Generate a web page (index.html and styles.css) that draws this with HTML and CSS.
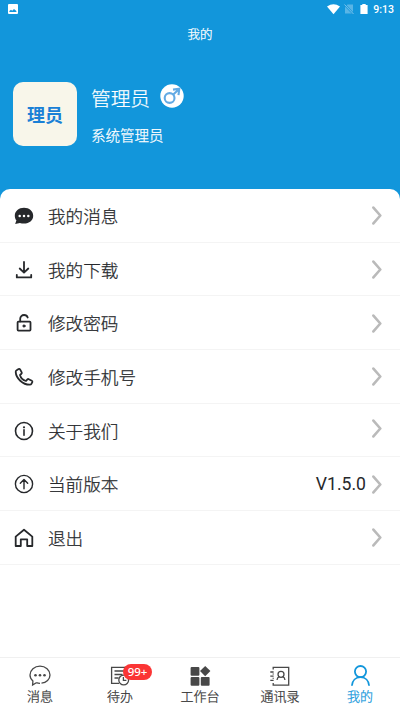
FILE: index.html
```html
<!DOCTYPE html>
<html lang="zh-CN">
<head>
<meta charset="utf-8">
<meta name="viewport" content="width=device-width, initial-scale=1">
<title>我的</title>
<link rel="stylesheet" href="styles.css">
</head>
<body>
<div class="app">
  <header class="hero">
    <div class="status">
      <svg class="status-image" width="10" height="10" viewBox="0 0 10 10"><rect width="10" height="10" rx="1" fill="#fff"/><path d="M1.400 8V7L3 5.700l1.200 1.100L6 5l2.400 2v1z" fill="#1296db"/></svg>
      <div class="status-right">
        <svg width="13" height="11" viewBox="0 0 13 11"><path d="M0 2.600Q6.500-2 13 2.600L6.500 10.300z" fill="#fff"/></svg>
        <svg class="sim" width="10" height="11" viewBox="0 0 10 11"><path d="M3.500 .5H9v9H1V3z" fill="#fff" opacity=".3"/><path d="M.5 .5l9 9.500" stroke="#1296db" stroke-width="2"/><path d="M.5 .5l9 9.500" stroke="#8ac8ed" stroke-width=".9"/></svg>
        <svg class="battery" width="8" height="11" viewBox="0 0 8 11"><path d="M2.300 0h3.400v1H7.600V10H.4V1h1.900z" fill="#fff"/></svg>
        <span class="clock">9:13</span>
      </div>
    </div>
    <h1 class="title">我的</h1>
    <div class="profile">
      <div class="avatar">理员</div>
      <div class="who">
        <div class="name">管理员
          <svg class="gender" width="24" height="24" viewBox="0 0 24 24"><circle cx="12" cy="12" r="11.700" fill="#fff"/><g fill="none" stroke="#63aae4" stroke-width="2.100"><circle cx="9.600" cy="14" r="4.900"/><path d="M13.300 10.400L18.600 5.400M13 5.600l6.300-.8-.8 6.300"/></g></svg>
        </div>
        <div class="role">系统管理员</div>
      </div>
    </div>
  </header>

  <main class="menu">
    <div class="row">
      <svg class="icon" viewBox="0 0 20 20"><path d="M10 1.800c5.200 0 9.200 3.300 9.200 7.900s-4 7.900-9.200 7.900c-1.500 0-2.900-.2-4.100-.7L1.200 18l1.200-3.700C1.300 13.100.8 11.500.8 9.700c0-4.600 4-7.900 9.200-7.900z" fill="#26282b"/><g fill="#fff"><circle cx="5.700" cy="9.900" r="1.250"/><circle cx="10" cy="9.900" r="1.250"/><circle cx="14.300" cy="9.900" r="1.250"/></g></svg>
      <span class="label">我的消息</span>
      <svg class="chevron" viewBox="0 0 10 19"><path d="M1.400 1.600L8.300 9.500 1.400 17.400"/></svg>
    </div>
    <div class="row">
      <svg class="icon line" viewBox="0 0 20 20"><path d="M10 2v10.300M5.700 8.500L10 12.600l4.300-4.100M2.800 14.800v2.600h14.400v-2.600"/></svg>
      <span class="label">我的下载</span>
      <svg class="chevron" viewBox="0 0 10 19"><path d="M1.400 1.600L8.300 9.500 1.400 17.400"/></svg>
    </div>
    <div class="row">
      <svg class="icon line" viewBox="0 0 20 20"><rect x="3.600" y="8.600" width="12.900" height="9" rx=".8"/><path d="M6.200 8.400V5.800c0-2.300 1.700-3.800 3.900-3.800 1.700 0 3.100.9 3.600 2.500"/><circle cx="10" cy="13" r="1.100" fill="#26282b" stroke-width="1"/></svg>
      <span class="label">修改密码</span>
      <svg class="chevron" viewBox="0 0 10 19"><path d="M1.400 1.600L8.300 9.500 1.400 17.400"/></svg>
    </div>
    <div class="row">
      <svg class="icon line" viewBox="0 0 20 20"><path d="M2.600 3.200l2-1.200c.6-.3 1.100-.2 1.500.4l1.600 3c.3.600.2 1-.3 1.400L6 8c.7 2.700 3.200 5.300 6 6l1.400-1.600c.4-.4.800-.5 1.400-.2l3 1.500c.6.300.7.800.5 1.400l-.9 1.700c-.3.600-.8.900-1.600.9C8.800 17.800 2 11.300 1.700 4.900c0-.8.300-1.400.9-1.700z"/></svg>
      <span class="label">修改手机号</span>
      <svg class="chevron" viewBox="0 0 10 19"><path d="M1.400 1.600L8.300 9.500 1.400 17.400"/></svg>
    </div>
    <div class="row">
      <svg class="icon line info" viewBox="0 0 20 20"><circle cx="10" cy="10" r="8.500"/><path d="M10 8.800v5.400"/><circle cx="10" cy="6.300" r="1.100" fill="#26282b" stroke="none"/></svg>
      <span class="label">关于我们</span>
      <svg class="chevron raised" viewBox="0 0 10 19"><path d="M1.400 1.600L8.300 9.500 1.400 17.400"/></svg>
    </div>
    <div class="row">
      <svg class="icon line thin" viewBox="0 0 20 20"><circle cx="10" cy="10" r="8.600"/><path d="M10 14.700V5.800M6.300 9.300L10 5.600l3.700 3.700"/></svg>
      <span class="label">当前版本</span>
      <span class="value">V1.5.0</span>
      <svg class="chevron" viewBox="0 0 10 19"><path d="M1.400 1.600L8.300 9.500 1.400 17.400"/></svg>
    </div>
    <div class="row">
      <svg class="icon line" viewBox="0 0 20 20"><path d="M1.700 18V8.600L10 1.700l8.300 6.900V18h-5.100v-6.700H6.800V18z"/></svg>
      <span class="label">退出</span>
      <svg class="chevron" viewBox="0 0 10 19"><path d="M1.400 1.600L8.300 9.500 1.400 17.400"/></svg>
    </div>
  </main>

  <nav class="tabs">
    <div class="tab">
      <svg class="tab-icon" viewBox="0 0 24 24"><path d="M8.300 19.700c1.200.4 2.400.6 3.700.6M13.500 20.200C18.400 19.600 22 16.200 22 12c0-4.700-4.500-8.800-10-8.800S2 7.300 2 12c0 2.400 1.100 4.500 2.900 6l-.3 4 3.700-2.300"/><g fill="#484848" stroke="none"><circle cx="7.500" cy="12.300" r="1.300"/><circle cx="12" cy="12.300" r="1.300"/><circle cx="16.500" cy="12.300" r="1.300"/></g></svg>
      <span>消息</span>
    </div>
    <div class="tab">
      <svg class="tab-icon" viewBox="0 0 24 24"><path d="M11 20.400H3.600v-16h16.200v8M6.500 8h10M6.500 11.500h8M6.500 15h4"/><circle cx="15.700" cy="17" r="4.900"/><path d="M15.400 14v3.300h3"/></svg>
      <b class="badge">99+</b>
      <span>待办</span>
    </div>
    <div class="tab">
      <svg class="tab-icon" viewBox="0 0 24 24"><g fill="#484848" stroke="none"><rect x="2.600" y="4" width="8.800" height="8.800" rx="1"/><rect x="2.600" y="14" width="8.800" height="8.800" rx="1"/><rect x="12.800" y="14" width="8.800" height="8.800" rx="1"/><path d="M17.200 2.900l5.200 5.200-5.200 5.200-5.200-5.200z"/></g></svg>
      <span>工作台</span>
    </div>
    <div class="tab">
      <svg class="tab-icon" viewBox="0 0 24 24"><path d="M5.200 6.600V4.400h15.500v17.800H5.200V20M2.300 9h3.300M2.300 13.200h3.300M2.300 17.400h3.300M5.200 10.500v1M5.200 14.800v1"/><circle cx="13" cy="11.300" r="3"/><path d="M11.200 13.700c-1.300.6-2 1.700-2.200 3.300M14.800 13.700c1.300.6 2 1.700 2.200 3.300"/></svg>
      <span>通讯录</span>
    </div>
    <div class="tab active">
      <svg class="tab-icon" viewBox="0 0 24 24"><circle cx="12.500" cy="8.600" r="5.600"/><path d="M3.900 22.800c.3-5.200 3.800-8.600 8.600-8.600s8.300 3.400 8.600 8.600"/></svg>
      <span>我的</span>
    </div>
  </nav>
</div>
</body>
</html>
```
FILE: styles.css
```css
* {
  box-sizing: border-box;
}

body {
  margin: 0;
  background: #fff;
  color: #26282b;
  font-family: "Noto Sans CJK SC", sans-serif;
  font-weight: 300;
  -webkit-text-stroke: 0.25px currentColor;
}

svg {
  display: block;
  flex: none;
}

.app {
  display: flex;
  flex-direction: column;
  height: 711px;
  overflow: hidden;
}

.hero {
  flex: none;
  height: 201px;
  background: #1296db;
  color: #fff;
}

.status {
  display: flex;
  justify-content: space-between;
  height: 20px;
  padding: 4px 6px 0 8px;
}

.status-right {
  display: flex;
  align-items: flex-start;
}

.sim {
  margin-left: 4px;
}

.battery {
  margin-left: 6px;
}

.clock {
  margin-left: 5px;
  font: 500 10.500px/11px Roboto, sans-serif;
  -webkit-text-stroke: 0;
}

.title {
  margin: 4px 0 0;
  font-size: 12.500px;
  font-weight: inherit;
  line-height: 20px;
  text-align: center;
}

.profile {
  display: flex;
  padding: 38px 13px 0;
}

.avatar {
  width: 64px;
  height: 64px;
  border-radius: 10px;
  background: #f8f6ea;
  color: #1a80d6;
  font-size: 18px;
  font-weight: 700;
  line-height: 64px;
  text-align: center;
  -webkit-text-stroke: 0;
}

.who {
  margin-left: 14px;
}

.name {
  display: flex;
  align-items: center;
  height: 30px;
  font-size: 19.700px;
}

.gender {
  margin: -2px 0 0 10px;
}

.role {
  margin-top: 12px;
  font-size: 14.500px;
  line-height: 22px;
}

.menu {
  flex: 1;
  margin-top: -12px;
  border-radius: 10px 10px 0 0;
  background: #fff;
}

.row {
  display: flex;
  align-items: center;
  height: 53.700px;
  padding: 1px 18px 0 14px;
  border-bottom: 1px solid #f4f4f4;
}

.icon {
  width: 20px;
  height: 20px;
}

.line {
  fill: none;
  stroke: #26282b;
  stroke-width: 1.800;
  stroke-linecap: round;
  stroke-linejoin: round;
}

.info {
  stroke-width: 1.600;
}

.thin {
  stroke-width: 1.400;
}

.label {
  flex: 1;
  margin-left: 14px;
  font-size: 17.600px;
  line-height: 26px;
}

.value {
  margin-right: 6px;
  font: 400 17.600px/26px Roboto, sans-serif;
  -webkit-text-stroke: 0;
}

.chevron {
  width: 10px;
  height: 19px;
  fill: none;
  stroke: #bababa;
  stroke-width: 2.600;
  stroke-linecap: round;
  stroke-linejoin: round;
}

.raised {
  margin-bottom: 5px;
}

.tabs {
  display: flex;
  flex: none;
  height: 54px;
  border-top: 1px solid #f0f0f0;
}

.tab {
  position: relative;
  display: flex;
  flex: 1;
  flex-direction: column;
  align-items: center;
  padding-top: 5px;
  color: #383838;
  font-size: 13px;
  line-height: 17px;
}

.tab-icon {
  width: 24px;
  height: 24px;
  fill: none;
  stroke: #484848;
  stroke-width: 1.300;
}

.badge {
  position: absolute;
  top: 6px;
  left: 43px;
  width: 29px;
  height: 16px;
  border-radius: 8px;
  background: #fb3535;
  color: #fff;
  font: 500 11.500px/16px "Noto Sans", sans-serif;
  text-align: center;
  -webkit-text-stroke: 0;
}

.active {
  color: #1296db;
}

.active .tab-icon {
  stroke: #1296db;
  stroke-width: 1.800;
}
```
